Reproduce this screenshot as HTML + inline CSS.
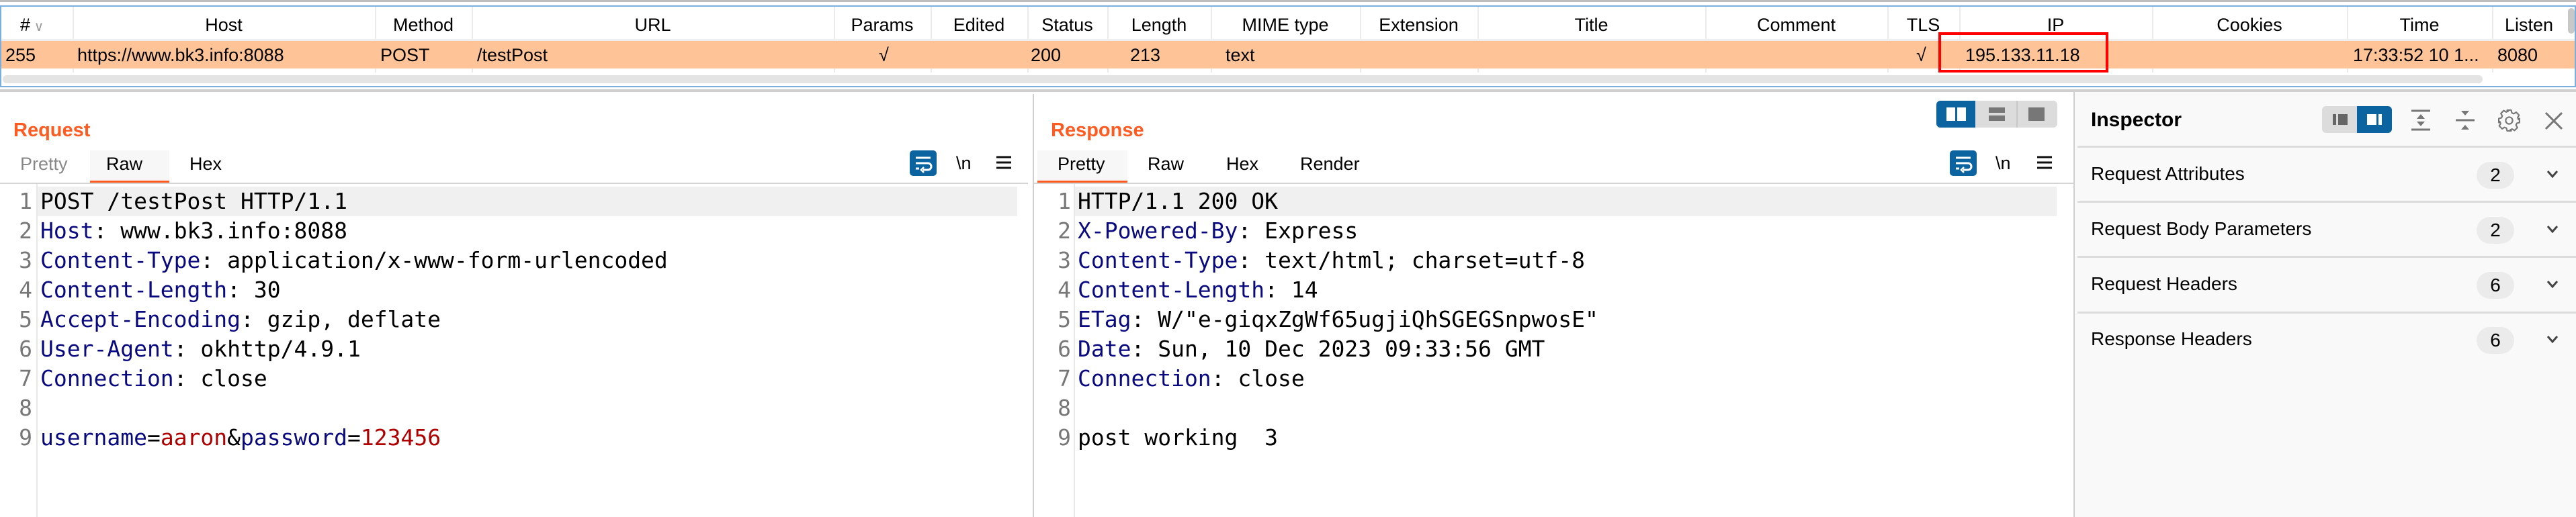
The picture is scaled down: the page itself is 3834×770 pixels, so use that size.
<!DOCTYPE html>
<html><head><meta charset="utf-8"><style>
*{margin:0;padding:0;box-sizing:border-box}
body{width:3834px;height:770px;position:relative;overflow:hidden;background:#fff;font-family:"Liberation Sans",sans-serif;color:#000}
.a{position:absolute;white-space:nowrap}
.h{font-size:27px;top:22px;text-align:center}
.d{font-size:27px;top:67px}
.vl{position:absolute;top:10px;width:2px;height:98px;background:#ebebeb}
.code{position:absolute;font-family:"DejaVu Sans Mono",monospace;font-size:33px;line-height:44px;white-space:pre}
.ln{color:#777;text-align:right}
.k{color:#0a0a80}.r{color:#b00000}
.tab{font-size:27px;top:229px}
.ins{font-size:28px;left:3112px}
.badge{position:absolute;left:3686px;width:56px;height:40px;border-radius:20px;background:#ebebeb;font-size:28px;text-align:center;line-height:40px}
.sep{position:absolute;left:3092px;right:0;height:3px;background:#dcdcdc}
</style></head><body>
<div class="a" style="left:0;top:0;width:3834px;height:3px;background:#bdbdbd"></div>
<div class="a" style="left:0;top:8px;width:3834px;height:122px;border:2px solid #7aaedc"></div>
<div class="vl" style="left:108px"></div><div class="vl" style="left:558px"></div><div class="vl" style="left:702px"></div><div class="vl" style="left:1241px"></div><div class="vl" style="left:1385px"></div><div class="vl" style="left:1529px"></div><div class="vl" style="left:1648px"></div><div class="vl" style="left:1802px"></div><div class="vl" style="left:2024px"></div><div class="vl" style="left:2199px"></div><div class="vl" style="left:2538px"></div><div class="vl" style="left:2809px"></div><div class="vl" style="left:2916px"></div><div class="vl" style="left:3203px"></div><div class="vl" style="left:3493px"></div><div class="vl" style="left:3709px"></div>
<div class="a" style="left:2px;top:58px;width:3830px;height:3px;background:#eeeeee"></div>
<div class="a h" style="left:30px">#<span style="color:#999;font-size:20px"> ∨</span></div>
<div class="a h" style="left:108px;width:450px">Host</div>
<div class="a h" style="left:558px;width:144px">Method</div>
<div class="a h" style="left:702px;width:539px">URL</div>
<div class="a h" style="left:1241px;width:144px">Params</div>
<div class="a h" style="left:1385px;width:144px">Edited</div>
<div class="a h" style="left:1529px;width:119px">Status</div>
<div class="a h" style="left:1648px;width:154px">Length</div>
<div class="a h" style="left:1802px;width:222px">MIME type</div>
<div class="a h" style="left:2024px;width:175px">Extension</div>
<div class="a h" style="left:2199px;width:339px">Title</div>
<div class="a h" style="left:2538px;width:271px">Comment</div>
<div class="a h" style="left:2809px;width:107px">TLS</div>
<div class="a h" style="left:2916px;width:287px">IP</div>
<div class="a h" style="left:3203px;width:290px">Cookies</div>
<div class="a h" style="left:3493px;width:216px">Time</div>
<div class="a h" style="left:3709px;width:110px">Listen</div>
<div class="a" style="left:3822px;top:12px;width:10px;height:38px;border-radius:5px;background:#c8c8c8"></div>
<div class="a" style="left:2px;top:61px;width:3830px;height:41px;background:#ffc398"></div>
<div class="a d" style="left:8px">255</div>
<div class="a d" style="left:115px">https://www.bk3.info:8088</div>
<div class="a d" style="left:566px">POST</div>
<div class="a d" style="left:710px">/testPost</div>
<div class="a d" style="left:1308px">√</div>
<div class="a d" style="left:1534px">200</div>
<div class="a d" style="left:1682px">213</div>
<div class="a d" style="left:1824px">text</div>
<div class="a d" style="left:2852px">√</div>
<div class="a d" style="left:2925px">195.133.11.18</div>
<div class="a d" style="left:3502px">17:33:52 10 1...</div>
<div class="a d" style="left:3717px">8080</div>
<div class="a" style="left:2885px;top:48px;width:253px;height:60px;border:4px solid #f00"></div>
<div class="a" style="left:4px;top:112px;width:3691px;height:12px;border-radius:6px;background:#e4e4e4"></div>
<div class="a" style="left:0;top:133px;width:3834px;height:4px;background:#cfcfcf"></div>
<div class="a" style="left:1537px;top:140px;width:2px;height:630px;background:#cfcfcf"></div>
<div class="a" style="left:20px;top:178px;font-size:29px;font-weight:bold;color:#ff5a1f">Request</div>
<div class="a" style="left:134px;top:224px;width:118px;height:46px;background:#f7f7f7"></div>
<div class="a" style="left:134px;top:269px;width:118px;height:4px;background:#ff5a1f"></div>
<div class="a tab" style="left:30px;color:#888">Pretty</div>
<div class="a tab" style="left:158px">Raw</div>
<div class="a tab" style="left:282px">Hex</div>
<div class="a" style="left:0;top:272px;width:1530px;height:2px;background:#d4d4d4"></div>
<svg class="a" style="left:1354px;top:224px" width="40" height="38" viewBox="0 0 40 38"><rect width="40" height="38" rx="5" fill="#0b63a0"/><path d="M9 11h22M9 19h18a5 5 0 0 1 0 10h-7M9 27h5" stroke="#fff" stroke-width="3" fill="none"/><path d="M21 25l-4 4 4 4" stroke="#fff" stroke-width="2.5" fill="none"/></svg>
<div class="a" style="left:1423px;top:228px;font-size:27px">\n</div>
<svg class="a" style="left:1483px;top:232px" width="22" height="20"><path d="M0 2h22M0 10h22M0 18h22" stroke="#111" stroke-width="3"/></svg>
<div class="a" style="left:56px;top:278px;width:1458px;height:44px;background:#f0f0f0"></div>
<div class="a" style="left:54px;top:274px;width:2px;height:496px;background:#e8e8e8"></div>
<div class="code ln" style="left:0;top:278px;width:48px">1
2
3
4
5
6
7
8
9</div>
<div class="code" style="left:60px;top:278px">POST /testPost HTTP/1.1
<span class="k">Host</span>: www.bk3.info:8088
<span class="k">Content-Type</span>: application/x-www-form-urlencoded
<span class="k">Content-Length</span>: 30
<span class="k">Accept-Encoding</span>: gzip, deflate
<span class="k">User-Agent</span>: okhttp/4.9.1
<span class="k">Connection</span>: close

<span class="k">username</span>=<span class="r">aaron</span>&amp;<span class="k">password</span>=<span class="r">123456</span></div>
<div class="a" style="left:1564px;top:178px;font-size:29px;font-weight:bold;color:#ff5a1f">Response</div>
<div class="a" style="left:2882px;top:150px;width:180px;height:40px;border-radius:6px;background:#dcdcdc;overflow:hidden">
<div class="a" style="left:0;top:0;width:58px;height:40px;background:#0b63a0"></div>
<div class="a" style="left:15px;top:10px;width:13px;height:20px;background:#fff"></div><div class="a" style="left:31px;top:10px;width:13px;height:20px;background:#fff"></div>
<div class="a" style="left:119px;top:0;width:2px;height:40px;background:#c8c8c8"></div>
<div class="a" style="left:78px;top:10px;width:24px;height:8px;background:#777"></div><div class="a" style="left:78px;top:22px;width:24px;height:8px;background:#777"></div>
<div class="a" style="left:137px;top:10px;width:24px;height:20px;background:#777"></div>
</div>
<div class="a" style="left:1544px;top:224px;width:134px;height:46px;background:#f7f7f7"></div>
<div class="a" style="left:1544px;top:269px;width:134px;height:4px;background:#ff5a1f"></div>
<div class="a tab" style="left:1574px">Pretty</div>
<div class="a tab" style="left:1708px">Raw</div>
<div class="a tab" style="left:1825px">Hex</div>
<div class="a tab" style="left:1935px">Render</div>
<div class="a" style="left:1539px;top:272px;width:1547px;height:2px;background:#d4d4d4"></div>
<svg class="a" style="left:2902px;top:224px" width="40" height="38" viewBox="0 0 40 38"><rect width="40" height="38" rx="5" fill="#0b63a0"/><path d="M9 11h22M9 19h18a5 5 0 0 1 0 10h-7M9 27h5" stroke="#fff" stroke-width="3" fill="none"/><path d="M21 25l-4 4 4 4" stroke="#fff" stroke-width="2.5" fill="none"/></svg>
<div class="a" style="left:2970px;top:228px;font-size:27px">\n</div>
<svg class="a" style="left:3032px;top:232px" width="22" height="20"><path d="M0 2h22M0 10h22M0 18h22" stroke="#111" stroke-width="3"/></svg>
<div class="a" style="left:1600px;top:278px;width:1461px;height:44px;background:#f0f0f0"></div>
<div class="a" style="left:1598px;top:274px;width:2px;height:496px;background:#e8e8e8"></div>
<div class="code ln" style="left:1550px;top:278px;width:44px">1
2
3
4
5
6
7
8
9</div>
<div class="code" style="left:1604px;top:278px">HTTP/1.1 200 OK
<span class="k">X-Powered-By</span>: Express
<span class="k">Content-Type</span>: text/html; charset=utf-8
<span class="k">Content-Length</span>: 14
<span class="k">ETag</span>: W/"e-giqxZgWf65ugjiQhSGEGSnpwosE"
<span class="k">Date</span>: Sun, 10 Dec 2023 09:33:56 GMT
<span class="k">Connection</span>: close

post working  3</div>
<div class="a" style="left:3086px;top:137px;width:748px;height:633px;background:#f9f9f9;border-left:2px solid #cfcfcf"></div>
<div class="a" style="left:3112px;top:162px;font-size:30px;font-weight:bold">Inspector</div>
<div class="a" style="left:3456px;top:158px;width:104px;height:40px;border-radius:6px;background:#dcdcdc;overflow:hidden">
<div class="a" style="left:16px;top:12px;width:5px;height:16px;background:#666"></div><div class="a" style="left:24px;top:12px;width:14px;height:16px;background:#666"></div>
<div class="a" style="left:52px;top:0;width:52px;height:40px;background:#0b63a0"></div>
<div class="a" style="left:67px;top:12px;width:14px;height:16px;background:#fff"></div><div class="a" style="left:84px;top:12px;width:5px;height:16px;background:#fff"></div>
</div>
<svg class="a" style="left:3589px;top:163px" width="28" height="32"><path d="M0 2h28M0 30h28" stroke="#777" stroke-width="3"/><path d="M14 7l-6 7h12zM14 25l-6-7h12z" fill="#777"/></svg>
<svg class="a" style="left:3655px;top:163px" width="28" height="32"><path d="M0 16h28" stroke="#777" stroke-width="3"/><path d="M8 2h12l-6 7zM8 30h12l-6-7z" fill="#777"/></svg>
<svg class="a" style="left:3716px;top:161px" width="37" height="37" viewBox="0 0 24 24"><path d="M10 2h4l.6 2.6 1.9.8 2.3-1.4 2.8 2.8-1.4 2.3.8 1.9L22 10v4l-2.6.6-.8 1.9 1.4 2.3-2.8 2.8-2.3-1.4-1.9.8L14 22h-4l-.6-2.6-1.9-.8-2.3 1.4-2.8-2.8 1.4-2.3-.8-1.9L2 14v-4l2.6-.6.8-1.9-1.4-2.3 2.8-2.8 2.3 1.4 1.9-.8z" fill="none" stroke="#777" stroke-width="1.4" stroke-linejoin="round"/><circle cx="12" cy="12" r="3.3" fill="none" stroke="#777" stroke-width="1.4"/></svg>
<svg class="a" style="left:3787px;top:166px" width="28" height="28"><path d="M2 2l24 24M26 2L2 26" stroke="#777" stroke-width="3"/></svg>
<div class="sep" style="top:217px"></div>
<div class="a ins" style="top:243px">Request Attributes</div><div class="badge" style="top:241px">2</div>
<div class="sep" style="top:299px"></div>
<div class="a ins" style="top:325px">Request Body Parameters</div><div class="badge" style="top:323px">2</div>
<div class="sep" style="top:381px"></div>
<div class="a ins" style="top:407px">Request Headers</div><div class="badge" style="top:405px">6</div>
<div class="sep" style="top:464px"></div>
<div class="a ins" style="top:489px">Response Headers</div><div class="badge" style="top:487px">6</div>
<svg class="a" style="left:3790px;top:253px" width="18" height="12"><path d="M2 2l7 8 7-8" stroke="#444" stroke-width="3" fill="none"/></svg>
<svg class="a" style="left:3790px;top:335px" width="18" height="12"><path d="M2 2l7 8 7-8" stroke="#444" stroke-width="3" fill="none"/></svg>
<svg class="a" style="left:3790px;top:417px" width="18" height="12"><path d="M2 2l7 8 7-8" stroke="#444" stroke-width="3" fill="none"/></svg>
<svg class="a" style="left:3790px;top:499px" width="18" height="12"><path d="M2 2l7 8 7-8" stroke="#444" stroke-width="3" fill="none"/></svg>
</body></html>
